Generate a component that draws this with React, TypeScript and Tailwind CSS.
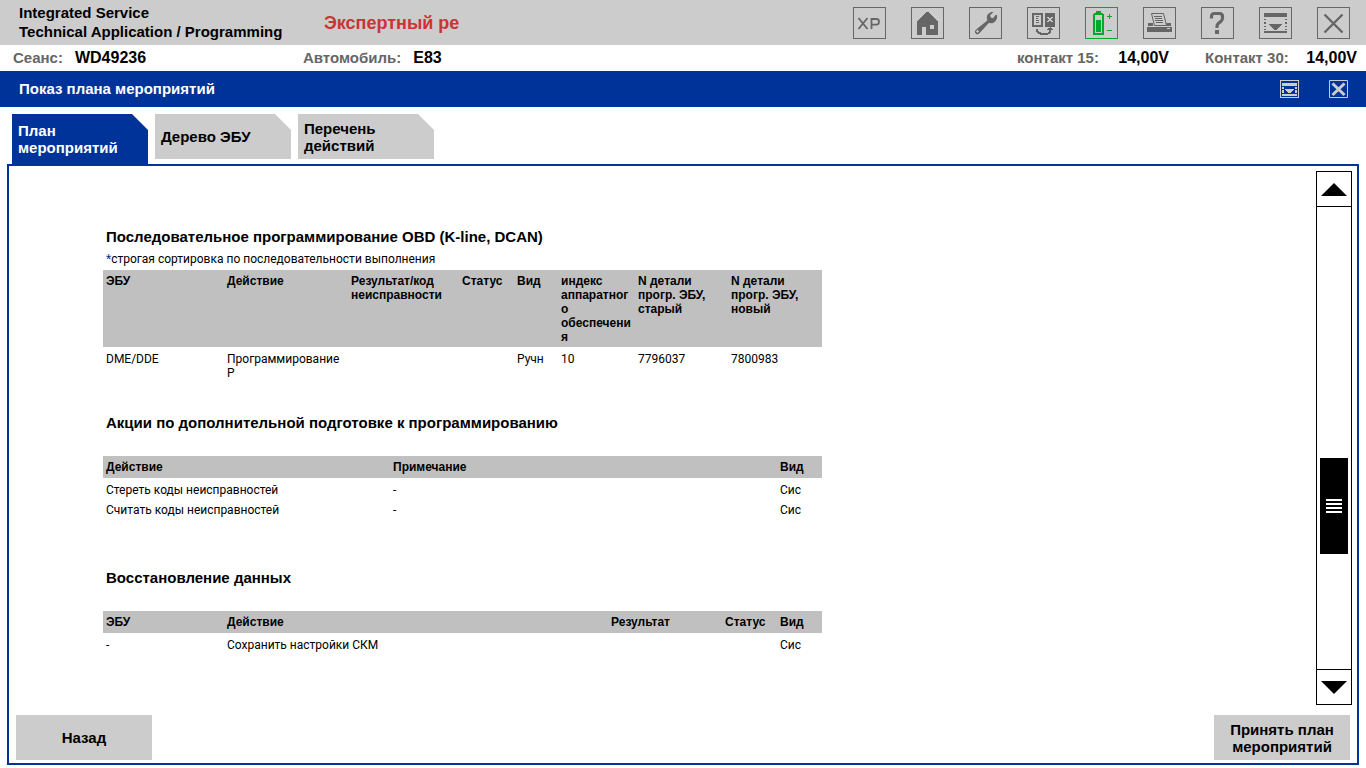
import type { ReactNode } from 'react';

function ToolButton({ label, active = false, children }: { label: string; active?: boolean; children: ReactNode }) {
  return (
    <button
      type="button"
      aria-label={label}
      className={
        active
          ? 'flex h-8 w-[33px] items-center justify-center border border-[#00a82d] text-[#00a82d]'
          : 'flex h-8 w-[33px] items-center justify-center border border-[#666666] text-[#666666]'
      }
    >
      <svg viewBox="1 1 31 30" className="h-[30px] w-[31px]" fill="none" shapeRendering="crispEdges" aria-hidden="true">
        {children}
      </svg>
    </button>
  );
}

function Toolbar() {
  return (
    <div className="flex items-center gap-[25px]">
      <ToolButton label="XP">
        <g stroke="currentColor" strokeWidth="1.8" shapeRendering="geometricPrecision">
          <path d="M5.5 11l9 11M14.500 11l-9 11" />
          <path d="M18.500 22V12h5q2.500 0 2.500 2.800t-2.500 2.800h-5" />
        </g>
      </ToolButton>
      <ToolButton label="Home">
        <path fill="currentColor" fillRule="evenodd" d="M16 5h1l10 9v14H15v-8h-4v8H6V14zM19 18v4h4v-4z" />
      </ToolButton>
      <ToolButton label="Service">
        <g shapeRendering="geometricPrecision">
          <path
            fill="currentColor"
            d="M24.500 5h-2.500l-3.500 2.500-.8 3.200.6 2.800L6.800 22.800a2.700 2.700 0 0 0-.3 3.600 2.700 2.700 0 0 0 3.900-.1L19.800 16l3.700.3 3-2 1.500-3V8h-1.500L24 11.300l-2.300-.8-.5-2.300z"
          />
          <path stroke="#cccccc" d="M8.500 22.800v3M7 24.300h3" />
        </g>
      </ToolButton>
      <ToolButton label="Programming">
        <path fill="currentColor" fillRule="evenodd" d="M5 6h11v14H5zM7 8v10h7V8zM9 9h3v1H9zM9 11h2v1H9zM9 13h3v1H9zM9 15h3v1H9zM18 6h10v14H18z" />
        <path fill="#cccccc" d="M20 10h2v1h2v-1h2v1h-1v1h-1v1h1v1h1v1h-2v-1h-2v1h-2v-1h1v-1h1v-1h-1v-1h-1z" />
        <path fill="currentColor" d="M9 22h2v2h1v1h2v1h7v-1h1v-2h-2v-1h1v-1h2v-1h1v1h1v1h1v1h-2v3h-1v1h-2v1H13v-1h-2v-1h-1v-1H9z" />
      </ToolButton>
      <ToolButton label="Battery" active>
        <path fill="currentColor" fillRule="evenodd" d="M11 4h5v2h2v1h1v21H8V7h1V6h2zM10 8v18h7V8z" />
        <path fill="currentColor" d="M11 13h5v12h-5zM22 9h2V7h1v2h2v1h-2v2h-1v-2h-2zM22 23h5v1h-5z" />
      </ToolButton>
      <ToolButton label="Print">
        <path fill="currentColor" d="M4 20h25v5H4zM5 16h5v3H5zM23 16h5v3h-5z" />
        <path fill="#cccccc" stroke="currentColor" d="M8.500 6.500h12l3 12h-12z" shapeRendering="geometricPrecision" />
        <path fill="currentColor" d="M11 9h8v1h-8zM12 11h7v1h-7zM12 13h8v1h-8zM13 15h7v1h-7z" />
        <path fill="#cccccc" d="M24 21h3v1h-3z" />
      </ToolButton>
      <ToolButton label="Help">
        <g shapeRendering="geometricPrecision">
          <path stroke="currentColor" strokeWidth="3.200" d="M10.500 11.500V9.500q0-3 3-3h5q3 0 3 3v1.500q0 2-1.500 3.300l-2.500 2q-1.500 1.200-1.500 3V21" />
        </g>
        <path fill="currentColor" d="M14 23h4v4h-4z" />
      </ToolButton>
      <ToolButton label="Menu">
        <path fill="currentColor" d="M5 6h23v4H5zM5 24h23v2H5zM5 12h2v1H5zM5 15h2v2H5zM5 19h2v1H5zM5 22h2v1H5zM26 12h2v1h-2zM26 15h2v2h-2zM26 19h2v1h-2zM26 22h2v1h-2zM10 17h13v1h-1v1h-1v1h-1v1h-1v1h-1v1h-3v-1h-1v-1h-1v-1h-1v-1h-1v-1h-1z" />
      </ToolButton>
      <ToolButton label="Close">
        <path stroke="currentColor" strokeWidth="2.400" d="M7.500 7.500l18 18M25.500 7.500l-18 18" shapeRendering="geometricPrecision" />
      </ToolButton>
    </div>
  );
}

function Field({ label, value }: { label: string; value: string }) {
  return (
    <div className="flex items-baseline justify-between gap-3 whitespace-nowrap">
      <dt className="text-[#666666]">{label}</dt>
      <dd className="text-base leading-[26px]">{value}</dd>
    </div>
  );
}

const tabBase =
  'flex w-[136px] items-center pr-4 pl-[6px] text-left leading-[17px] [clip-path:polygon(0_0,calc(100%-16px)_0,100%_16px,100%_100%,0_100%)]';

function Tabs() {
  return (
    <div role="tablist" className="flex items-start gap-[7px] pl-3 pt-[7px]">
      <button type="button" role="tab" aria-selected="true" className={`${tabBase} h-[50px] bg-[#003399] text-white`}>
        План мероприятий
      </button>
      <button type="button" role="tab" aria-selected="false" className={`${tabBase} h-[45px] bg-[#cccccc]`}>
        Дерево ЭБУ
      </button>
      <button type="button" role="tab" aria-selected="false" className={`${tabBase} h-[45px] bg-[#cccccc]`}>
        Перечень действий
      </button>
    </div>
  );
}

type Column = { title: string; width: string };

function PlanTable({ label, columns, rows }: { label: string; columns: Column[]; rows: string[][] }) {
  return (
    <table aria-label={label} className="w-[719px] table-fixed border-collapse text-left text-xs leading-[14px]">
      <thead className="bg-[#c0c0c0]">
        <tr className="h-[22px]">
          {columns.map((c) => (
            <th key={c.title} scope="col" className={`${c.width} pt-1 pr-0 pb-[3px] pl-[3px] align-top font-bold wrap-anywhere`}>
              {c.title}
            </th>
          ))}
        </tr>
      </thead>
      <tbody className="font-[Roboto,'Liberation_Sans',sans-serif] font-normal">
        {rows.map((r) => (
          <tr key={r.join()}>
            {r.map((cell, i) => (
              <td key={columns[i].title} className="pt-[5px] pr-0 pb-px pl-[3px] align-top">
                {cell}
              </td>
            ))}
          </tr>
        ))}
      </tbody>
    </table>
  );
}

function Plan() {
  return (
    <div className="flex-1 pt-14 pl-[94px]">
      <section>
        <h2 className="pl-[3px] leading-5">Последовательное программирование OBD (K-line, DCAN)</h2>
        <p className="pt-[5px] pb-1 pl-[3px] font-[Roboto,'Liberation_Sans',sans-serif] text-xs leading-[14px] font-normal">
          <span className="text-[#003399]">*</span>строгая сортировка по последовательности выполнения
        </p>
        <PlanTable
          label="Последовательное программирование"
          columns={[
            { title: 'ЭБУ', width: 'w-[121px]' },
            { title: 'Действие', width: 'w-[124px]' },
            { title: 'Результат/код неисправности', width: 'w-[111px]' },
            { title: 'Статус', width: 'w-[55px]' },
            { title: 'Вид', width: 'w-[44px]' },
            { title: 'индекс аппаратного обеспечения', width: 'w-[77px]' },
            { title: 'N детали прогр. ЭБУ, старый', width: 'w-[93px]' },
            { title: 'N детали прогр. ЭБУ, новый', width: 'w-[94px]' },
          ]}
          rows={[['DME/DDE', 'Программирование P', '', '', 'Ручн', '10', '7796037', '7800983']]}
        />
      </section>
      <section className="mt-8">
        <h2 className="pb-[23px] pl-[3px] leading-5">Акции по дополнительной подготовке к программированию</h2>
        <PlanTable
          label="Акции по подготовке"
          columns={[
            { title: 'Действие', width: 'w-[287px]' },
            { title: 'Примечание', width: 'w-[387px]' },
            { title: 'Вид', width: 'w-[45px]' },
          ]}
          rows={[
            ['Стереть коды неисправностей', '-', 'Сис'],
            ['Считать коды неисправностей', '-', 'Сис'],
          ]}
        />
      </section>
      <section className="mt-[50px]">
        <h2 className="pb-[23px] pl-[3px] leading-5">Восстановление данных</h2>
        <PlanTable
          label="Восстановление данных"
          columns={[
            { title: 'ЭБУ', width: 'w-[121px]' },
            { title: 'Действие', width: 'w-[384px]' },
            { title: 'Результат', width: 'w-[114px]' },
            { title: 'Статус', width: 'w-[55px]' },
            { title: 'Вид', width: 'w-[45px]' },
          ]}
          rows={[['-', 'Сохранить настройки СКМ', '', '', 'Сис']]}
        />
      </section>
    </div>
  );
}

function ScrollBar() {
  return (
    <div className="flex w-9 flex-col border border-black">
      <button type="button" aria-label="Прокрутить вверх" className="flex h-[35px] items-center justify-center border-b border-black">
        <svg viewBox="0 0 26 13" className="h-[13px] w-[26px]" aria-hidden="true">
          <path d="M13 0l13 13H0z" />
        </svg>
      </button>
      <div className="flex grow flex-col px-[3px]">
        <div className="grow-[251]" />
        <div className="flex h-24 flex-col items-center justify-center gap-[2px] bg-black">
          <i className="h-[2px] w-4 bg-white" />
          <i className="h-[2px] w-4 bg-white" />
          <i className="h-[2px] w-4 bg-white" />
          <i className="h-[2px] w-4 bg-white" />
        </div>
        <div className="grow-[115]" />
      </div>
      <button type="button" aria-label="Прокрутить вниз" className="flex h-[35px] items-center justify-center border-t border-black">
        <svg viewBox="0 0 26 13" className="h-[13px] w-[26px]" aria-hidden="true">
          <path d="M0 0h26L13 13z" />
        </svg>
      </button>
    </div>
  );
}

export default function App() {
  return (
    <div className="flex min-h-screen flex-col bg-white font-['Liberation_Sans',Arial,sans-serif] text-[15px] font-bold text-black">
      <header className="flex items-center justify-between bg-[#cccccc] pr-4 pl-[19px]">
        <div className="flex items-center">
          <h1 className="w-[305px] pt-[3px] pb-1 leading-[19px]">
            Integrated Service
            <br />
            Technical Application / Programming
          </h1>
          <p className="w-[135px] overflow-hidden text-lg leading-6 whitespace-nowrap text-[#cc3333]">Экспертный ре</p>
        </div>
        <Toolbar />
      </header>
      <dl className="flex justify-between pr-[9px] pl-[13px] leading-[26px]">
        <div className="flex">
          <div className="flex w-[290px]">
            <Field label="Сеанс:" value="WD49236" />
          </div>
          <Field label="Автомобиль:" value="E83" />
        </div>
        <div className="grid grid-cols-[152px_152px] gap-9">
          <Field label="контакт 15:" value="14,00V" />
          <Field label="Контакт 30:" value="14,00V" />
        </div>
      </dl>
      <div className="flex h-9 items-center justify-between bg-[#003399] pr-[18px] pl-[19px] text-white">
        <h2>Показ плана мероприятий</h2>
        <div className="flex gap-[30px] text-[#cccccc]">
          <button type="button" aria-label="Меню окна" className="h-[18px] w-[19px]">
            <svg viewBox="0 0 19 18" className="h-[18px] w-[19px]" shapeRendering="crispEdges" aria-hidden="true">
              <path fill="currentColor" fillRule="evenodd" d="M0 0h19v18H0zM1 1v16h17V1z" />
              <path fill="currentColor" d="M2 3h15v3H2zM2 14h15v2H2zM2 7h2v2H2zM2 10h2v3H2zM15 7h2v2h-2zM15 10h2v3h-2zM5 9h9v1h-1v1h-1v1h-1v1H8v-1H7v-1H6v-1H5z" />
            </svg>
          </button>
          <button type="button" aria-label="Закрыть окно" className="h-[18px] w-[19px]">
            <svg viewBox="0 0 19 18" className="h-[18px] w-[19px]" fill="none" stroke="currentColor" aria-hidden="true">
              <path d="M.5.5h18v17H.5z" />
              <path strokeWidth="3" d="M3.500 3.500l12 11.500M15.500 3.500L3.500 15" />
            </svg>
          </button>
        </div>
      </div>
      <Tabs />
      <main className="mx-[7px] mb-[3px] flex flex-1 flex-col border-2 border-[#003399]">
        <div className="flex flex-1 pt-[5px] pr-[5px]">
          <Plan />
          <ScrollBar />
        </div>
        <footer className="flex justify-between px-[7px] pt-[10px] pb-[3px] leading-[17px]">
          <button type="button" className="h-[45px] w-[136px] bg-[#cccccc]">
            Назад
          </button>
          <button type="button" className="h-[45px] w-[136px] bg-[#cccccc]">
            Принять план мероприятий
          </button>
        </footer>
      </main>
    </div>
  );
}
